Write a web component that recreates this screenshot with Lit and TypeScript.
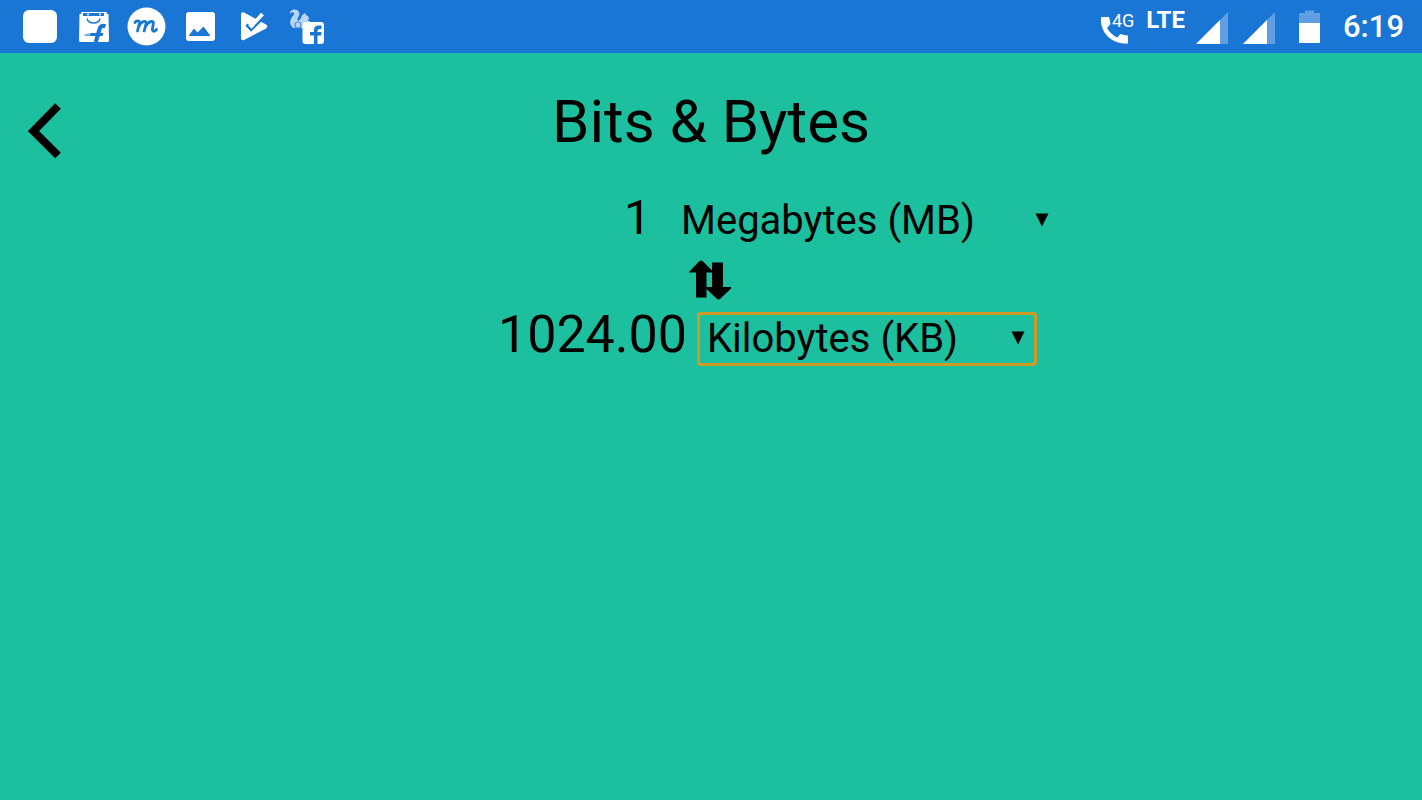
import { LitElement, html, css, svg } from "lit";
import { customElement, property, state } from "lit/decorators.js";

const UNITS = [
  { id: "b", label: "Bits (b)", size: 0.125 },
  { id: "B", label: "Bytes (B)", size: 1 },
  { id: "KB", label: "Kilobytes (KB)", size: 1024 },
  { id: "MB", label: "Megabytes (MB)", size: 1024 ** 2 },
  { id: "GB", label: "Gigabytes (GB)", size: 1024 ** 3 },
];

const NOTIFICATIONS = [
  svg`<rect x="3" y="10" width="34" height="33" rx="6" fill="#fff"/>`,
  svg`<path d="M8.500 12H33.500L34 14H35.500L36 40.500Q36 42 34.500 42H7.500Q6 42 6 40.500L6.500 14H8Z" fill="#fff"/>
    <path d="M10 13H31V16H10Z" fill="#1976d5"/>
    <circle cx="15" cy="14.500" r="1" fill="#fff"/><circle cx="27" cy="14.500" r="1" fill="#fff"/>
    <path d="M14 18.500Q15 23 20.500 23Q26 23 27 18.500" fill="none" stroke="#1976d5" stroke-width="1.300"/>
    <path d="M32.500 26.200Q27.500 24.500 26.300 30L22.800 42" fill="none" stroke="#1976d5" stroke-width="4.200"/>
    <path d="M18 33H30.500L29.500 36H17Z" fill="#1976d5"/>
    <path d="M11 34.500L18 33V36L12 36Z" fill="#1976d5" opacity=".6"/>`,
  svg`<circle cx="20.500" cy="26.500" r="19" fill="#fff"/>
    <path d="M9 22.500C10 20.500 14 20 13.500 23L11.500 31M12.500 27C14.500 21.500 21 19 20 24L18.200 31M19.200 27C21.500 21.500 28.500 19 27.300 24L26.500 28C25.500 32 29 32 30.500 29.500" fill="none" stroke="#1976d5" stroke-width="2.800" stroke-linecap="round"/>`,
  svg`<rect x="7" y="12" width="29" height="29" rx="3" fill="#fff"/>
    <path d="M9.500 36L15 28.500L18.500 32.500L24.500 26.500L31.500 36Z" fill="#1976d5"/>`,
  svg`<path d="M9 14.500V38.500Q9.500 41 12 40L34 28.500Q36.500 26.500 34 24.500L12 12.500Q9 11.500 9 14.500Z" fill="#fff"/>
    <path d="M14.500 24.500L19 29.500L31.500 17" fill="none" stroke="#1976d5" stroke-width="3.200"/>
    <path d="M17.500 24L19.500 26L30.500 14" fill="none" stroke="#fff" stroke-width="3.800"/>`,
  svg`<path d="M5 14C4 9 12 8 14 12C15.500 16 12 17 12.500 20C13 22 15 20 16 18C17 14 19 14 20 13L21 15C24 16 25 19 22.500 21H25V28H9C6 27 4 23 6 19C7 16 10 15 9 13C8 12 6 12 5 14Z" fill="#b9d5f3"/>
    <circle cx="13" cy="25" r="3" fill="none" stroke="#4c92dd" stroke-width="1.200"/>
    <rect x="17.500" y="22" width="21.500" height="22" rx="3" fill="#fff"/>
    <path d="M29 44V35.500H25V32H29V30Q29 25.500 33.500 25.500H36.500V29H34.500Q32.500 29 32.500 31V32H36.500L36 35.500H32.500V44Z" fill="#1976d5"/>`,
];

@customElement("status-bar")
class StatusBar extends LitElement {
  @property() time = "6:19";

  static styles = css`
    :host {
      display: flex;
      justify-content: space-between;
      height: 53px;
      padding: 0 18px 0 20px;
      background: #1976d5;
      color: #fff;
    }
    .group {
      display: flex;
      align-items: center;
    }
    .notifications {
      gap: 13px;
    }
    svg {
      display: block;
      flex: none;
    }
    .network {
      align-self: flex-start;
      margin: 4px 11px 0 10px;
      font-size: 24px;
      line-height: 32px;
      font-weight: 700;
    }
    .call {
      font-size: 18px;
    }
    .signals {
      display: flex;
      gap: 15px;
    }
    .battery {
      margin: 0 22px 0 24px;
    }
    .time {
      font-size: 31px;
      line-height: 55px;
      font-weight: 500;
    }
  `;

  private signal() {
    return html`<svg width="32" height="53" viewBox="0 0 32 53" aria-hidden="true">
      <path d="M0 44L32 12V44Z" fill="#5f9fe1" />
      <path d="M0 44L24 20V44Z" fill="#fff" />
    </svg>`;
  }

  render() {
    return html`
      <div class="group notifications">
        ${NOTIFICATIONS.map(
          (icon) => html`<svg width="40" height="53" viewBox="0 0 40 53" aria-hidden="true">${icon}</svg>`
        )}
      </div>
      <div class="group">
        <svg class="call" width="36" height="53" viewBox="0 0 36 53">
          <path d="M2 17H9Q10 20 10.500 24L7 28Q10.500 34 17 37.500L20.500 34Q24 35 28 35.500V43.500C12 44.500 0 33 1 18Q1 17 2 17Z" fill="#fff" />
          <text x="12" y="27" fill="#fff">4G</text>
        </svg>
        <span class="network">LTE</span>
        <div class="signals">${this.signal()}${this.signal()}</div>
        <svg class="battery" width="22" height="53" viewBox="0 0 22 53" aria-hidden="true">
          <path d="M0 13H6V10.500H15V13H21V23H0Z" fill="#5f9fe1" />
          <path d="M0 23H21V43H0Z" fill="#fff" />
        </svg>
        <span class="time">${this.time}</span>
      </div>
    `;
  }
}

@customElement("app-root")
class AppRoot extends LitElement {
  @state() private amount = "1";
  @state() private from = "MB";
  @state() private to = "KB";

  static styles = css`
    :host {
      display: block;
      min-height: 100vh;
      background: #1cbf9e;
      color: #000;
      font-family: Roboto, "Liberation Sans", sans-serif;
    }
    .header {
      display: grid;
      grid-template-columns: 1fr auto 1fr;
      align-items: start;
      padding: 34px 28px 0;
    }
    button {
      padding: 0;
      border: 0;
      background: none;
      color: inherit;
      cursor: pointer;
    }
    button svg {
      display: block;
    }
    .back {
      justify-self: start;
      margin-top: 16px;
    }
    .title {
      margin: 0;
      font-size: 60px;
      line-height: 70px;
      font-weight: 400;
    }
    .converter {
      display: flex;
      flex-direction: column;
      align-items: center;
      gap: 12px;
      padding-top: 35px;
    }
    .row {
      display: flex;
      align-items: baseline;
      gap: 10px;
    }
    .amount,
    .result {
      box-sizing: border-box;
      width: 300px;
      height: 44px;
      line-height: 44px;
      text-align: right;
    }
    .amount {
      padding: 0 10px 0 0;
      border: 0;
      outline: 0;
      background: none;
      color: inherit;
      font-family: inherit;
      font-size: 48px;
    }
    .result {
      width: 302px;
      font-size: 52px;
    }
    .picker {
      display: grid;
      grid-template-columns: 1fr auto;
      align-items: center;
      width: 390px;
    }
    .picker.target {
      width: 340px;
    }
    .unit {
      grid-area: 1 / 1 / 2 / 3;
      box-sizing: border-box;
      width: 100%;
      height: 54px;
      padding: 0 7px 2px;
      border: 3px solid transparent;
      border-radius: 4px;
      outline: 0;
      appearance: none;
      background: none;
      color: inherit;
      font-family: inherit;
      font-size: 40px;
    }
    .target .unit {
      border-color: #cf9a24;
    }
    .arrow {
      grid-area: 1 / 2;
      margin: 0 12px 2px 0;
      pointer-events: none;
    }
  `;

  private get result() {
    const size = (id: string) => UNITS.find((u) => u.id === id)!.size;
    return ((Number(this.amount) * size(this.from)) / size(this.to)).toFixed(2);
  }

  private swap() {
    [this.from, this.to] = [this.to, this.from];
  }

  private picker(name: string, label: string, value: string, pick: (id: string) => void) {
    return html`<div class="picker ${name}">
      <select
        class="unit"
        aria-label=${label}
        @change=${(e: Event) => pick((e.target as HTMLSelectElement).value)}
      >
        ${UNITS.map((u) => html`<option value=${u.id} ?selected=${u.id === value}>${u.label}</option>`)}
      </select>
      <svg class="arrow" width="14" height="14" viewBox="0 0 14 14" aria-hidden="true">
        <path d="M.5 .5H13.500L7 13.500Z" />
      </svg>
    </div>`;
  }

  render() {
    return html`
      <status-bar></status-bar>
      <header class="header">
        <button class="back" aria-label="Back">
          <svg width="34" height="56" viewBox="0 0 34 56">
            <path d="M30 3L5.500 28L30 52.500" fill="none" stroke="currentColor" stroke-width="8" />
          </svg>
        </button>
        <h1 class="title">Bits &amp; Bytes</h1>
      </header>
      <main class="converter">
        <div class="row">
          <input
            class="amount"
            aria-label="Amount"
            inputmode="decimal"
            .value=${this.amount}
            @input=${(e: Event) => (this.amount = (e.target as HTMLInputElement).value)}
          />
          ${this.picker("source", "From unit", this.from, (id) => (this.from = id))}
        </div>
        <button aria-label="Swap units" @click=${this.swap}>
          <svg width="44" height="40" viewBox="0 0 44 40">
            <path d="M0 12L10 1.500Q12 -.5 14 1.500L23 10.500V2.500H34V27H42V28.500L31.500 38.500Q29.500 40.500 27.500 38.500L17.500 29V37.500H7V12.500H0ZM17.500 12.500V27H23V12.500Z" fill-rule="evenodd" />
          </svg>
        </button>
        <div class="row">
          <output class="result">${this.result}</output>
          ${this.picker("target", "To unit", this.to, (id) => (this.to = id))}
        </div>
      </main>
    `;
  }
}
